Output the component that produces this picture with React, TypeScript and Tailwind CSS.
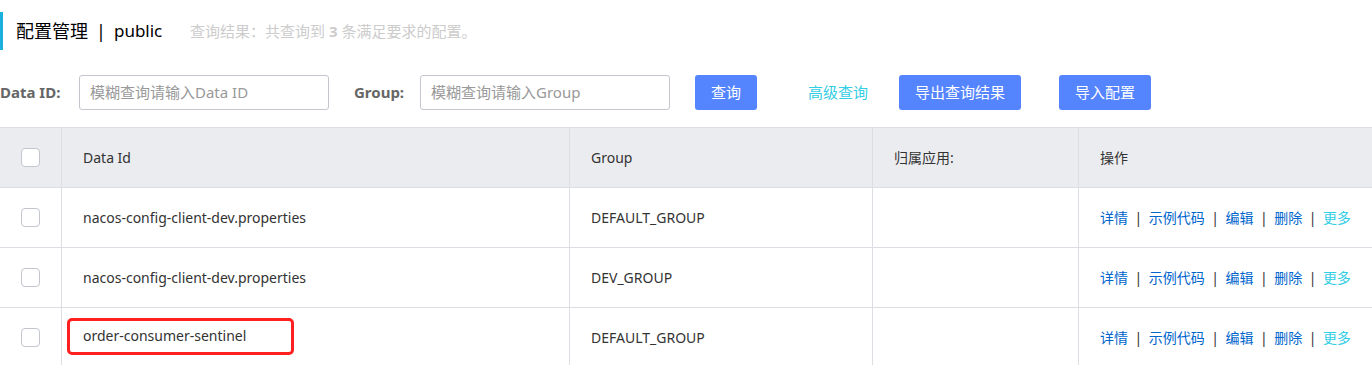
const rows = [
  { id: "nacos-config-client-dev.properties", group: "DEFAULT_GROUP", mark: false },
  { id: "nacos-config-client-dev.properties", group: "DEV_GROUP", mark: false },
  { id: "order-consumer-sentinel", group: "DEFAULT_GROUP", mark: true },
];

const font = "font-['Noto_Sans','Noto_Sans_CJK_SC',sans-serif]";

const Checkbox = () => (
  <div className="w-[19px] h-[19px] rounded-[4px] border border-[#c4c6cf] bg-white" />
);

const Actions = () => (
  <div className="flex items-center text-[14px] text-[#0066cc]">
    <span>详情</span>
    <span className="mx-[6.5px] text-[#333]">|</span>
    <span>示例代码</span>
    <span className="mx-[6.5px] text-[#333]">|</span>
    <span>编辑</span>
    <span className="mx-[6.5px] text-[#333]">|</span>
    <span>删除</span>
    <span className="mx-[6.5px] text-[#333]">|</span>
    <span className="text-[#33cde5]">更多</span>
  </div>
);

export default function App() {
  return (
    <div className={`w-[1372px] h-[365px] bg-white overflow-hidden ${font}`}>
      {/* title */}
      <div className="pt-[12px] flex items-center h-[50px]">
        <div className="w-[3px] h-[38px] bg-[#1cb0dc]" />
        <div className="ml-[13px] w-[161px] text-[18px] text-black flex items-center">
          <span>配置管理</span>
          <span className="mx-[8px]">|</span>
          <span className="text-[17px]">public</span>
        </div>
        <div className="ml-[13px] text-[15px] text-[#cccccc]">
          查询结果：共查询到 <span className="font-bold">3</span> 条满足要求的配置。
        </div>
      </div>

      {/* search form */}
      <div className="mt-[25px] flex items-center h-[35px]">
        <span className="w-[64px] text-[15px] font-bold text-[#666]">Data ID:</span>
        <div className="ml-[15px] w-[250px] h-[35px] border border-[#c4c6cf] rounded-[3px] flex items-center px-[10px] text-[15px] text-[#999]">
          模糊查询请输入Data ID
        </div>
        <span className="ml-[25px] w-[51px] text-[15px] font-bold text-[#666]">Group:</span>
        <div className="ml-[15px] w-[250px] h-[35px] border border-[#c4c6cf] rounded-[3px] flex items-center px-[10px] text-[15px] text-[#999]">
          模糊查询请输入Group
        </div>
        <button className="ml-[25px] w-[62px] h-[35px] rounded-[3px] bg-[#5584ff] text-white text-[15px]">查询</button>
        <span className="ml-[51px] w-[60px] text-[15px] text-[#33cde5]">高级查询</span>
        <button className="ml-[31px] w-[122px] h-[35px] rounded-[3px] bg-[#5584ff] text-white text-[15px]">导出查询结果</button>
        <button className="ml-[38px] w-[92px] h-[35px] rounded-[3px] bg-[#5584ff] text-white text-[15px]">导入配置</button>
      </div>

      {/* table */}
      <div className="mt-[17px] border-t border-[#dcdee3] text-[14px] text-[#333]">
        <div className="grid grid-cols-[62px_508px_303px_206px_1fr] h-[60px] bg-[#ebecf0] border-b border-[#dcdee3]">
          <div className="flex items-center pl-[21px] border-r border-[#dcdee3]"><Checkbox /></div>
          <div className="flex items-center pl-[21px] border-r border-[#dcdee3]">Data Id</div>
          <div className="flex items-center pl-[21px] border-r border-[#dcdee3]">Group</div>
          <div className="flex items-center pl-[21px] border-r border-[#dcdee3]">归属应用:</div>
          <div className="flex items-center pl-[21px]">操作</div>
        </div>
        {rows.map((r, i) => (
          <div key={i} className="grid grid-cols-[62px_508px_303px_206px_1fr] h-[60px] border-b border-[#dcdee3]">
            <div className="flex items-center pl-[21px] border-r border-[#dcdee3]"><Checkbox /></div>
            <div className="flex items-center pl-[5px] border-r border-[#dcdee3]">
              <div className={`flex items-center h-[37px] ${r.mark ? "w-[227px] border-[3px] border-[#ff2020] rounded-[5px] pl-[13px] -mt-[3px] pb-[2px]" : "pl-[16px]"}`}>
                {r.id}
              </div>
            </div>
            <div className="flex items-center pl-[21px] border-r border-[#dcdee3]">{r.group}</div>
            <div className="border-r border-[#dcdee3]" />
            <div className="flex items-center pl-[21px]"><Actions /></div>
          </div>
        ))}
      </div>
    </div>
  );
}
